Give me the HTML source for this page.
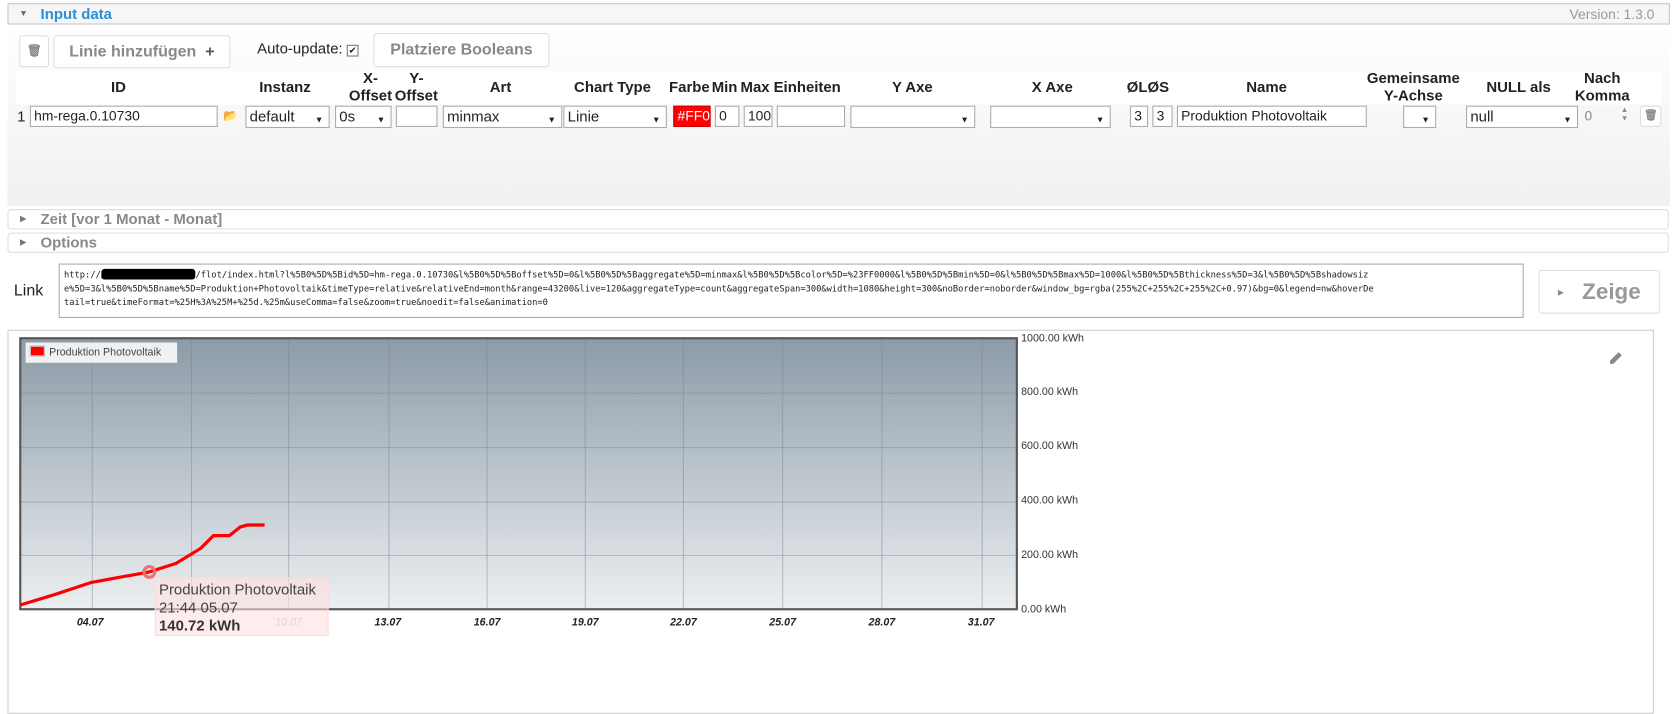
<!DOCTYPE html>
<html><head><meta charset="utf-8"><style>
*{box-sizing:border-box}
html,body{margin:0;width:1673px;height:661px;overflow:hidden;background:#fff}
#w{position:absolute;left:0;top:0;width:1568px;height:620px;transform:scale(1.0670);transform-origin:0 0;font-family:"Liberation Sans",Arial,sans-serif;color:#222}
.a{position:absolute}
.hdr{left:7px;top:3px;width:1558px;height:20px;border:1px solid #c5c5c5;background:#f6f6f6}
.body{left:7px;top:23px;width:1558px;height:170px;background:linear-gradient(#fff,#f0f0f0);}
.btn{border:1px solid #ddd;background:#fff;border-radius:3px;color:#888;font-weight:bold;font-size:15px;text-align:center}
.th{font-weight:bold;font-size:14px;text-align:center;line-height:16px}
.in{border:1px solid #aaa;background:#fff;height:20px;font-size:13px;padding:1px 3px;line-height:16px;top:99px}
.sel{border:1px solid #aaa;background:#fff;height:21px;font-size:14px;padding:1px 3px;line-height:17px;top:99px}
.sel:after{content:"▼";position:absolute;right:5px;top:4px;font-size:8px}
.acc{left:7px;width:1557px;height:19px;border:1px solid #ddd;border-radius:3px;font-weight:bold;color:#888;font-size:14px;padding-left:30px;line-height:17px}
.acc:before{content:"▸";position:absolute;left:11px;font-size:11px;color:#777}
.url{font-family:"DejaVu Sans Mono","Liberation Mono",monospace;font-size:8.2px;line-height:13px;color:#222;white-space:pre}
.yl{left:957px;font-size:10px;color:#333}
.xl{top:578px;font-size:10px;font-style:italic;font-weight:bold;color:#222}
</style></head><body><div id="w">
<div class="a hdr"></div>
<div class="a" style="left:18px;top:4px;font-size:8px;color:#666;line-height:18px">▼</div>
<div class="a" style="left:38px;top:5px;font-size:14px;font-weight:bold;color:#2a8fd8">Input data</div>
<div class="a" style="left:1471px;top:6px;font-size:13px;color:#999">Version: 1.3.0</div>
<div class="a body"></div>
<div class="a btn" style="left:18px;top:33px;width:28px;height:30px;line-height:28px;font-size:11px">🗑</div>
<div class="a btn" style="left:50px;top:33px;width:166px;height:31px;line-height:29px">Linie hinzufügen &nbsp;<span style="color:#555">+</span></div>
<div class="a" style="left:241px;top:37px;font-size:14px">Auto-update: <span style="display:inline-block;width:11px;height:11px;border:1px solid #777;font-size:9px;line-height:9px;text-align:center;background:#fff">✔</span></div>
<div class="a btn" style="left:350px;top:31px;width:165px;height:32px;line-height:30px">Platziere Booleans</div>
<div class="a" style="left:15px;top:66px;width:1542px;height:32px;background:#fff"></div>
<div class="a th" style="left:104px;top:73px">ID</div>
<div class="a th" style="left:243px;top:73px">Instanz</div>
<div class="a th" style="left:327px;top:65px">X-<br>Offset</div>
<div class="a th" style="left:370px;top:65px">Y-<br>Offset</div>
<div class="a th" style="left:459px;top:73px">Art</div>
<div class="a th" style="left:538px;top:73px">Chart Type</div>
<div class="a th" style="left:627px;top:73px">Farbe</div>
<div class="a th" style="left:667px;top:73px">Min</div>
<div class="a th" style="left:694px;top:73px">Max</div>
<div class="a th" style="left:725px;top:73px">Einheiten</div>
<div class="a th" style="left:836px;top:73px">Y Axe</div>
<div class="a th" style="left:967px;top:73px">X Axe</div>
<div class="a th" style="left:1056px;top:73px">ØLØS</div>
<div class="a th" style="left:1168px;top:73px">Name</div>
<div class="a th" style="left:1281px;top:65px">Gemeinsame<br>Y-Achse</div>
<div class="a th" style="left:1393px;top:73px">NULL als</div>
<div class="a th" style="left:1476px;top:65px">Nach<br>Komma</div>
<div class="a" style="left:16px;top:101px;font-size:14px">1</div>
<div class="a in" style="left:28px;width:176px">hm-rega.0.10730</div>
<div class="a" style="left:209px;top:102px;font-size:11px;color:#666">📂</div>
<div class="a sel" style="left:230px;width:79px">default</div>
<div class="a sel" style="left:314px;width:53px">0s</div>
<div class="a in" style="left:371px;width:39px"></div>
<div class="a sel" style="left:415px;width:112px">minmax</div>
<div class="a sel" style="left:528px;width:97px">Linie</div>
<div class="a in" style="left:631px;width:35px;background:#f00;color:#fff;overflow:hidden;border-color:#c00">#FF0000</div>
<div class="a in" style="left:670px;width:23px">0</div>
<div class="a in" style="left:697px;width:27px">100</div>
<div class="a in" style="left:728px;width:64px"></div>
<div class="a sel" style="left:797px;width:117px"></div>
<div class="a sel" style="left:928px;width:113px"></div>
<div class="a in" style="left:1059px;width:17px">3</div>
<div class="a in" style="left:1080px;width:19px">3</div>
<div class="a in" style="left:1103px;width:178px">Produktion Photovoltaik</div>
<div class="a sel" style="left:1315px;width:31px"></div>
<div class="a sel" style="left:1374px;width:105px">null</div>
<div class="a" style="left:1482px;top:99px;width:50px;height:20px;font-size:13px;color:#888;padding:2px 3px;background:#f7f7f7">0<span style="position:absolute;right:6px;top:1px;font-size:7px;line-height:8px">▲<br>▼</span></div>
<div class="a btn" style="left:1537px;top:99px;width:20px;height:20px;font-size:10px;line-height:18px">🗑</div>

<div class="a acc" style="top:196px">Zeit [vor 1 Monat - Monat]</div>
<div class="a acc" style="top:218px">Options</div>

<div class="a" style="left:13px;top:264px;font-size:15px">Link</div>
<div class="a url" style="left:55px;top:247px;width:1373px;height:51px;border:1px solid #aaa;padding:3px 4px">http://<span style="background:#000;color:#000;border-radius:3px">XXXXXXXXXXXXXXXXXX</span>/flot/index.html?l%5B0%5D%5Bid%5D=hm-rega.0.10730&amp;l%5B0%5D%5Boffset%5D=0&amp;l%5B0%5D%5Baggregate%5D=minmax&amp;l%5B0%5D%5Bcolor%5D=%23FF0000&amp;l%5B0%5D%5Bmin%5D=0&amp;l%5B0%5D%5Bmax%5D=1000&amp;l%5B0%5D%5Bthickness%5D=3&amp;l%5B0%5D%5Bshadowsiz
e%5D=3&amp;l%5B0%5D%5Bname%5D=Produktion+Photovoltaik&amp;timeType=relative&amp;relativeEnd=month&amp;range=43200&amp;live=120&amp;aggregateType=count&amp;aggregateSpan=300&amp;width=1080&amp;height=300&amp;noBorder=noborder&amp;window_bg=rgba(255%2C+255%2C+255%2C+0.97)&amp;bg=0&amp;legend=nw&amp;hoverDe
tail=true&amp;timeFormat=%25H%3A%25M+%25d.%25m&amp;useComma=false&amp;zoom=true&amp;noedit=false&amp;animation=0</div>
<div class="a btn" style="left:1442px;top:253px;width:114px;height:41px;line-height:39px;font-size:21px;color:#999"><span style="font-size:10px;color:#888;vertical-align:middle">▸</span>&nbsp;&nbsp; Zeige</div>

<div class="a" style="left:7px;top:309px;width:1543px;height:360px;border:1px solid #ccc"></div>
<svg class="a" style="left:0;top:0" width="1673" height="661">
<defs><linearGradient id="g" x1="0" y1="0" x2="0" y2="1"><stop offset="0" stop-color="#8c9ba8"/><stop offset="1" stop-color="#eceff1"/></linearGradient></defs>
<rect x="19" y="317" width="934" height="254" fill="url(#g)" stroke="#555" stroke-width="2"/>
<g stroke="#7a8590" stroke-opacity="0.45" stroke-width="1">
<path d="M86.5 318V570M179.5 318V570M270.5 318V570M364.5 318V570M456.5 318V570M548.5 318V570M640.5 318V570M733.5 318V570M826.5 318V570M920.5 318V570"/>
<path d="M20 368.5H952M20 419.5H952M20 470.5H952M20 520.5H952"/>
</g>
<polyline fill="none" stroke="#f00" stroke-width="3" stroke-linejoin="round" points="19,567 52,557 85,546 140,536 165,528 188,514 200,502 215,502 225,494 232,492 248,492"/>
<circle cx="140" cy="536" r="5" fill="none" stroke="#f07070" stroke-width="3"/>
<path d="M1509 338l8-8 3 3-8 8h-3z" fill="#888"/>
</svg>
<div class="a" style="left:24px;top:321px;width:142px;height:19px;background:rgba(255,255,255,0.85);font-size:10px;color:#444;padding:3px 4px"><span style="display:inline-block;width:14px;height:10px;background:#f00;border:1px solid #ccc;vertical-align:-1px;margin-right:4px"></span>Produktion Photovoltaik</div>
<div class="a yl" style="top:312px">1000.00 kWh</div>
<div class="a yl" style="top:362px">800.00 kWh</div>
<div class="a yl" style="top:413px">600.00 kWh</div>
<div class="a yl" style="top:464px">400.00 kWh</div>
<div class="a yl" style="top:515px">200.00 kWh</div>
<div class="a yl" style="top:566px">0.00 kWh</div>
<div class="a xl" style="left:72px">04.07</div>
<div class="a xl" style="left:258px;color:#bbb;font-weight:normal">10.07</div>
<div class="a xl" style="left:351px">13.07</div>
<div class="a xl" style="left:444px">16.07</div>
<div class="a xl" style="left:536px">19.07</div>
<div class="a xl" style="left:628px">22.07</div>
<div class="a xl" style="left:721px">25.07</div>
<div class="a xl" style="left:814px">28.07</div>
<div class="a xl" style="left:907px">31.07</div>
<div class="a" style="left:145px;top:541px;width:163px;height:55px;background:rgba(255,225,225,0.6);border:1px solid #fadada;font-size:14px;color:#444;padding:2px 3px;line-height:17px">Produktion Photovoltaik<br>21:44 05.07<br><b style="color:#333">140.72 kWh</b></div>
</div></body></html>
